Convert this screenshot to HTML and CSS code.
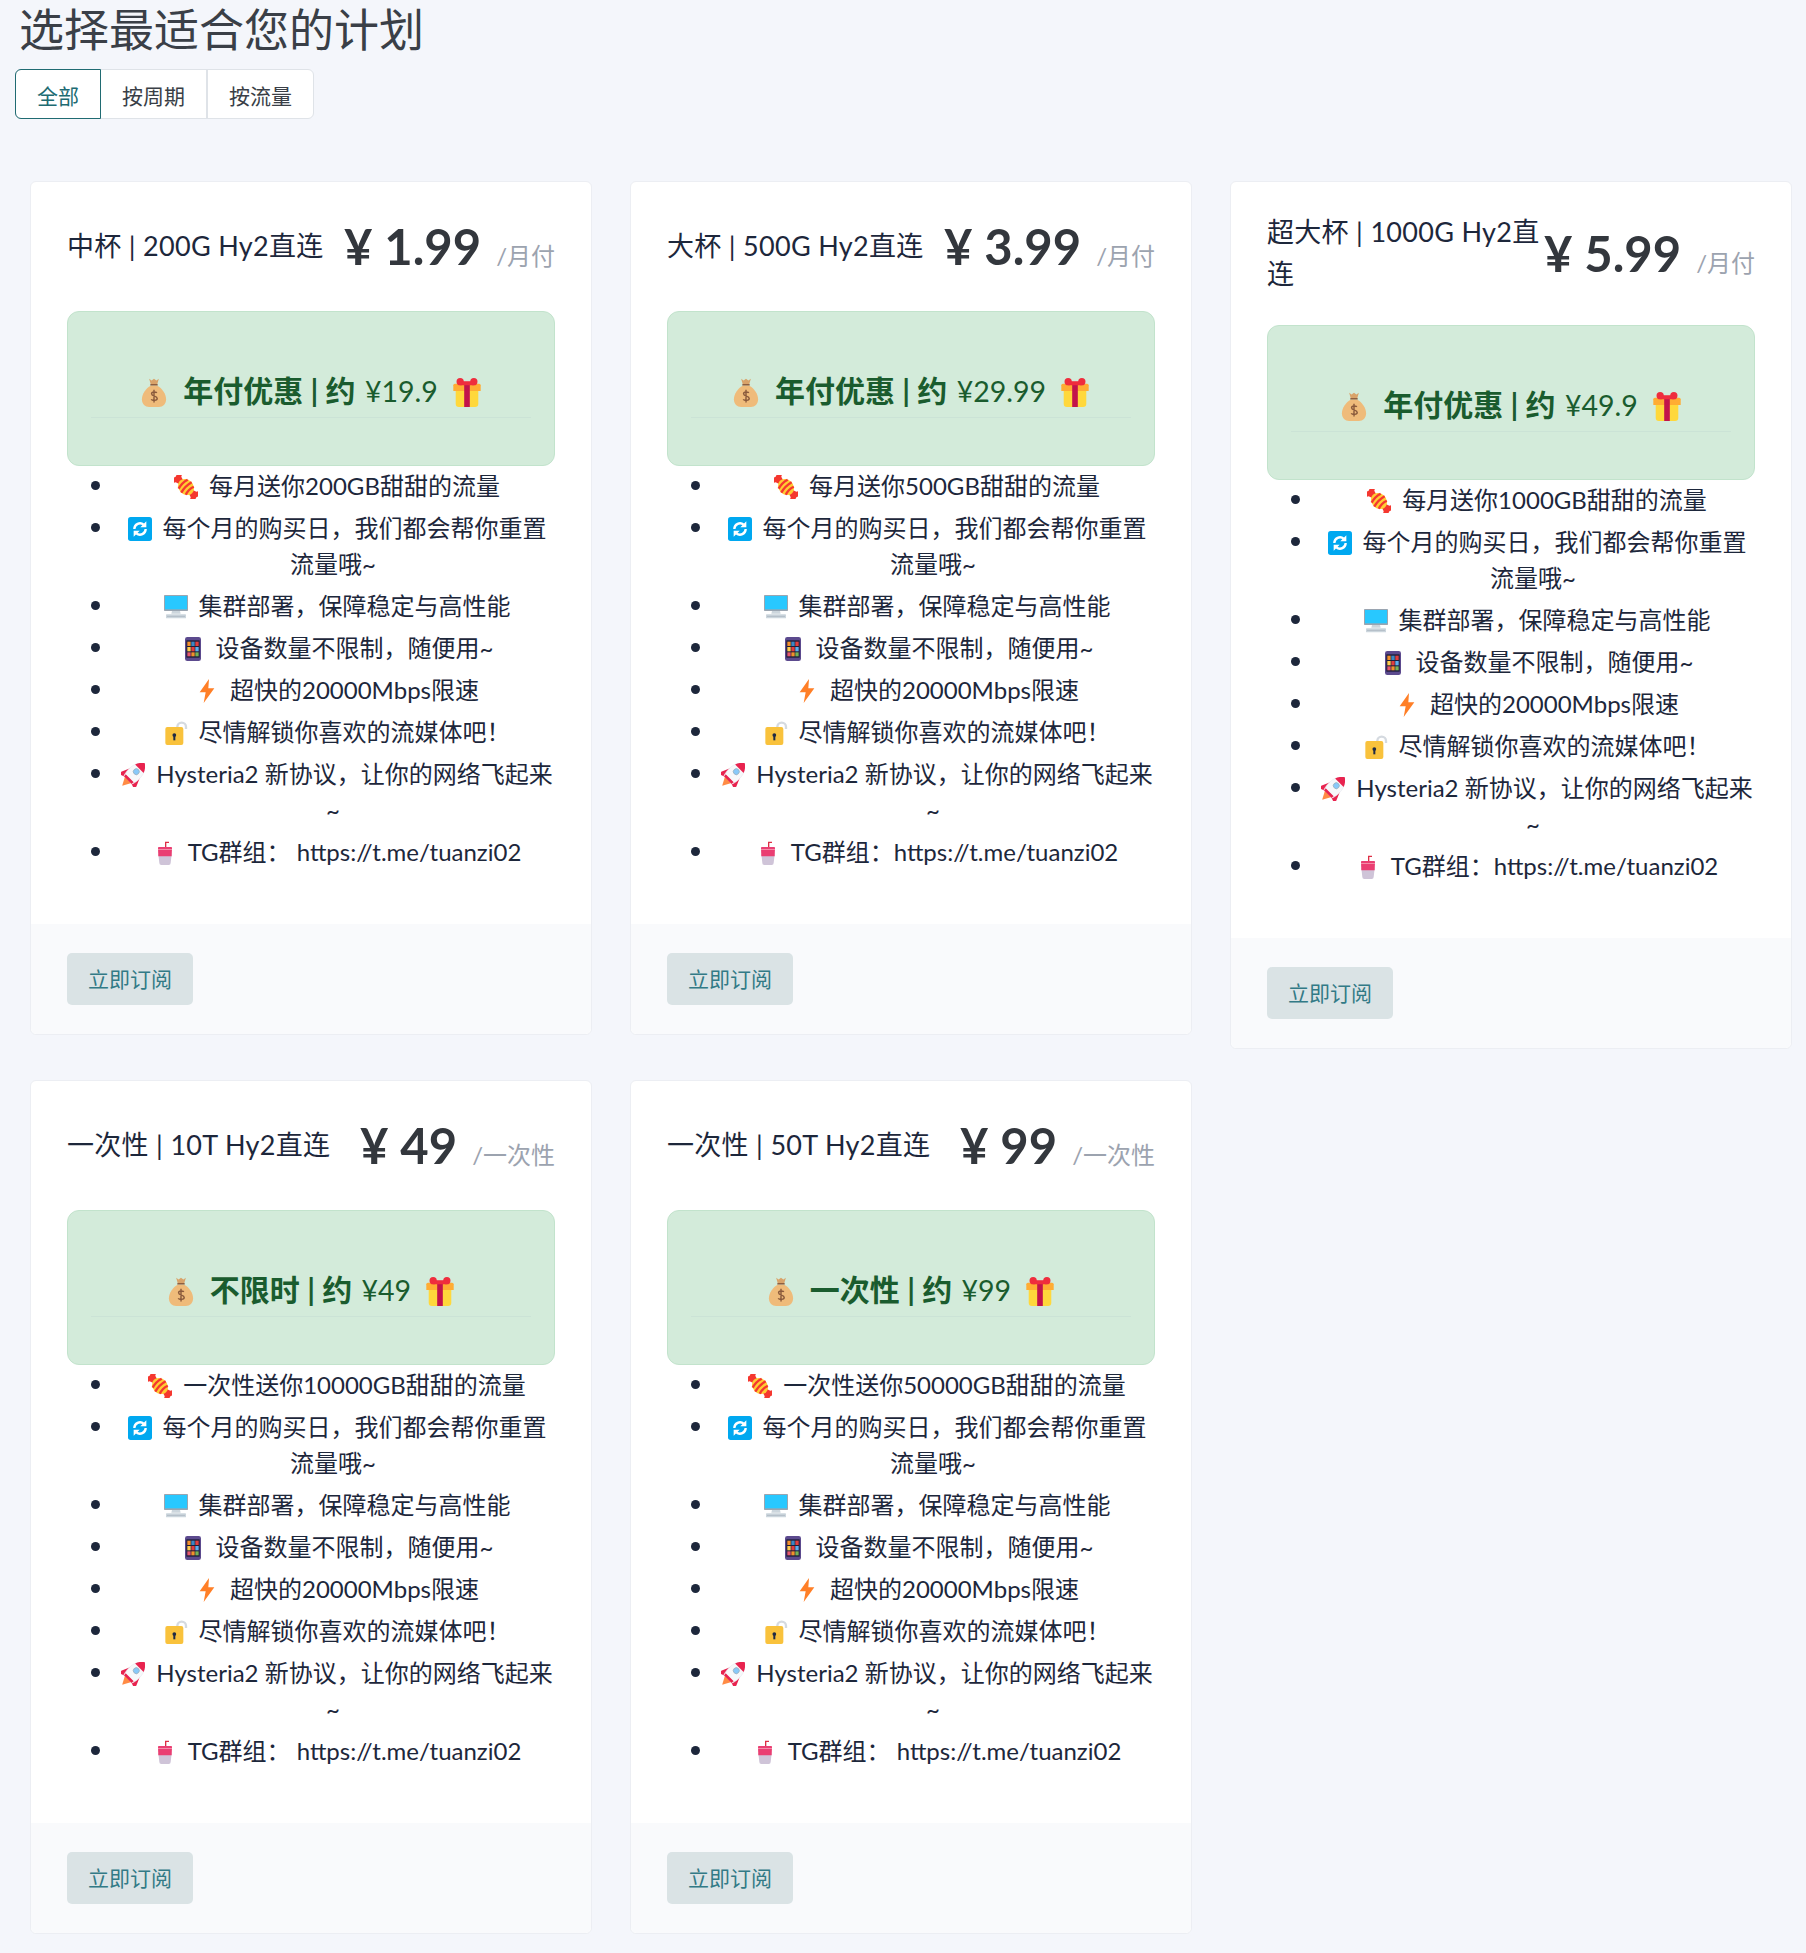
FILE: index.html
```html
<!DOCTYPE html>
<html lang="zh-CN">
<head>
  <meta charset="UTF-8" />
  <meta name="viewport" content="width=device-width, initial-scale=1.0" />
  <title>选择最适合您的计划</title>
  <link rel="stylesheet" href="styles.css">
</head>
<body>
  <svg class="sprite" xmlns="http://www.w3.org/2000/svg">
    <symbol id="i-bag" viewBox="3 0 30 36">
      <path fill="#D9A36A" d="M12 1l3 2 3-2 3 2 3-2-2 7H14z"/>
      <path fill="#8A5A3C" d="M13.500 7.500h9v2h-9z"/>
      <path fill="#EFBB7A" d="M14 9.500h8c6 3 11 10 11 17 0 6-4 9.500-9 9.500H12c-5 0-9-3.500-9-9.500 0-7 5-14 11-17z"/>
      <path fill="none" stroke="#8A5A3C" stroke-width="1.800" d="M21.500 18.500c-1-1.500-6.500-2-6.500 1 0 3.500 7 2.500 7 6 0 3-6 2.800-7.500 1M18 14.500v16"/>
    </symbol>
    <symbol id="i-gift" viewBox="1 0 34 36">
      <path fill="#FFD83B" d="M4 14h28v18a4 4 0 0 1-4 4H8a4 4 0 0 1-4-4z"/>
      <path fill="#FFAC33" d="M3 7h30a2 2 0 0 1 2 2v7H1V9a2 2 0 0 1 2-2z"/>
      <path fill="#C2134B" d="M14.500 7h7v29h-7z"/>
      <circle fill="#EF2D3D" cx="9.500" cy="4.500" r="4.500"/>
      <circle fill="#EF2D3D" cx="26.500" cy="4.500" r="4.500"/>
      <path fill="#EF2D3D" d="M9 4h18v5H9z"/>
    </symbol>
    <symbol id="i-candy" viewBox="0 0 36 36">
      <g transform="rotate(45 18 18)">
        <path fill="#F5372F" d="M-7 8l4 4 3-4 2 4 9 3v6l-9 3-2 4-3-4-4 4 3-10z"/>
        <path fill="#F5372F" d="M43 8l-4 4-3-4-2 4-9 3v6l9 3 2 4 3-4 4 4-3-10z"/>
        <ellipse fill="#FFCC33" cx="18" cy="18" rx="13" ry="11"/>
        <path fill="none" stroke="#F5372F" stroke-width="3.600" d="M12 8.500q-3 9.500 0 19M19 7q-3 11 0 22M26 9.500q-3 8.500 0 17"/>
      </g>
    </symbol>
    <symbol id="i-sync" viewBox="0 0 36 36">
      <rect fill="#00A8F0" width="36" height="36" rx="4"/>
      <path fill="none" stroke="#fff" stroke-width="3.500" d="M9.500 18a8.500 8.500 0 0 1 14-6.500M26.500 18a8.500 8.500 0 0 1-14 6.500"/>
      <path fill="#fff" d="M27.500 6.500v9h-9zM8.500 29.500v-9h9z"/>
    </symbol>
    <symbol id="i-pc" viewBox="0 0 36 36">
      <rect fill="#9AA5B1" y="0" width="36" height="24" rx="1"/>
      <rect fill="#28C8FF" x="1.500" y="1.500" width="33" height="20"/>
      <path fill="#CCD6DD" d="M12 24h12l1 4H11z"/>
      <rect fill="#CCD6DD" x="3" y="29" width="30" height="6" rx="1"/>
      <path stroke="#9AA5B1" stroke-width="1.200" stroke-dasharray="2 1" d="M5 32h26"/>
    </symbol>
    <symbol id="i-pad" viewBox="0 0 36 36">
      <rect fill="#5C4A8E" x="6" y="0" width="24" height="36" rx="3.500"/>
      <rect fill="#1D1D3A" x="8" y="5" width="20" height="26"/>
      <rect fill="#F4902C" x="9.500" y="7" width="5" height="6.500"/><rect fill="#3B88C3" x="15.500" y="7" width="5" height="6.500"/><rect fill="#E03E3E" x="21.500" y="7" width="5" height="6.500"/>
      <rect fill="#FFCC4D" x="9.500" y="15" width="5" height="6.500"/><rect fill="#E03E3E" x="15.500" y="15" width="5" height="6.500"/><rect fill="#5DADEC" x="21.500" y="15" width="5" height="6.500"/>
      <rect fill="#E8596E" x="9.500" y="23" width="5" height="6"/><rect fill="#F4902C" x="15.500" y="23" width="5" height="6"/><rect fill="#77B255" x="21.500" y="23" width="5" height="6"/>
    </symbol>
    <symbol id="i-bolt" viewBox="0 0 36 36">
      <path fill="#FF7F27" d="M21 0L7 20h9l-3 16 16-22h-9z"/>
    </symbol>
    <symbol id="i-lock" viewBox="0 0 36 36">
      <path fill="none" stroke="#D5DAE0" stroke-width="3.500" d="M20 14V9a6.500 6.500 0 0 1 13 0v3"/>
      <rect fill="#F9C23C" x="2" y="9" width="27" height="27" rx="3"/>
      <circle fill="#1F2A44" cx="15.500" cy="21" r="2.800"/>
      <path fill="#1F2A44" d="M14 21h3v8h-3z"/>
    </symbol>
    <symbol id="i-rocket" viewBox="0 0 36 36">
      <g transform="rotate(45 18 18)">
        <path fill="#FF8B45" d="M11 28h14l-7 13z"/>
        <path fill="#E8234F" d="M8 13L2 27l2 4 9-3zM28 13l6 14-2 4-9-3z"/>
        <path fill="#F7F8FA" stroke="#E6E8EE" stroke-width=".8" d="M18-7c13 9 12 25 9 35H9C6 18 5 2 18-7z"/>
        <path fill="#E8234F" d="M18-7c4.500 3 7.500 7 9 11.500H9C10.500 0 13.500-4 18-7zM9.500 25h17l-.8 4H10.300z"/>
        <circle fill="#88C9F9" stroke="#9AAAB4" cx="18" cy="11" r="4.500"/>
      </g>
    </symbol>
    <symbol id="i-cup" viewBox="0 0 36 36">
      <path fill="none" stroke="#DD2E44" stroke-width="2" d="M24 2h-5v8"/>
      <path fill="#CFC4D8" d="M8 20h20l-1.500 13a3 3 0 0 1-3 3h-11a3 3 0 0 1-3-3z"/>
      <path fill="#EA3E72" d="M8 9h20l.5 2-.5 12H8l-.5-12z"/>
      <path fill="#F7A0B4" d="M7.500 12h21v1.200h-21z"/>
    </symbol>
  </svg>

  <h1 class="page-title">选择最适合您的计划</h1>
  <div class="tabs">
    <a class="tab tab-active">全部</a>
    <a class="tab">按周期</a>
    <a class="tab">按流量</a>
  </div>

  <div class="plans">

    <div class="card">
      <div class="card-body">
        <div class="plan-head">
          <h3 class="plan-name">中杯 | 200G Hy2直连</h3>
          <div class="plan-price"><span class="amount">¥ 1.99</span><span class="period">/月付</span></div>
        </div>
        <div class="offer">
          <div class="offer-text"><svg class="emoji-big"><use href="#i-bag"/></svg><b>年付优惠 | 约</b> ¥19.9<svg class="emoji-big gift"><use href="#i-gift"/></svg></div>
          <hr class="offer-line">
        </div>
        <ul class="features">
          <li><svg class="emoji"><use href="#i-candy"/></svg>每月送你200GB甜甜的流量</li>
          <li><svg class="emoji"><use href="#i-sync"/></svg>每个月的购买日，我们都会帮你重置流量哦~</li>
          <li><svg class="emoji"><use href="#i-pc"/></svg>集群部署，保障稳定与高性能</li>
          <li><svg class="emoji"><use href="#i-pad"/></svg>设备数量不限制，随便用~</li>
          <li><svg class="emoji"><use href="#i-bolt"/></svg>超快的20000Mbps限速</li>
          <li><svg class="emoji"><use href="#i-lock"/></svg>尽情解锁你喜欢的流媒体吧！</li>
          <li><svg class="emoji"><use href="#i-rocket"/></svg>Hysteria2 新协议，让你的网络飞起来<br>~</li>
          <li><svg class="emoji"><use href="#i-cup"/></svg>TG群组：&nbsp;https://t.me/tuanzi02</li>
        </ul>
      </div>
      <div class="card-foot"><a class="btn">立即订阅</a></div>
    </div>

    <div class="card">
      <div class="card-body">
        <div class="plan-head">
          <h3 class="plan-name">大杯 | 500G Hy2直连</h3>
          <div class="plan-price"><span class="amount">¥ 3.99</span><span class="period">/月付</span></div>
        </div>
        <div class="offer">
          <div class="offer-text"><svg class="emoji-big"><use href="#i-bag"/></svg><b>年付优惠 | 约</b> ¥29.99<svg class="emoji-big gift"><use href="#i-gift"/></svg></div>
          <hr class="offer-line">
        </div>
        <ul class="features">
          <li><svg class="emoji"><use href="#i-candy"/></svg>每月送你500GB甜甜的流量</li>
          <li><svg class="emoji"><use href="#i-sync"/></svg>每个月的购买日，我们都会帮你重置流量哦~</li>
          <li><svg class="emoji"><use href="#i-pc"/></svg>集群部署，保障稳定与高性能</li>
          <li><svg class="emoji"><use href="#i-pad"/></svg>设备数量不限制，随便用~</li>
          <li><svg class="emoji"><use href="#i-bolt"/></svg>超快的20000Mbps限速</li>
          <li><svg class="emoji"><use href="#i-lock"/></svg>尽情解锁你喜欢的流媒体吧！</li>
          <li><svg class="emoji"><use href="#i-rocket"/></svg>Hysteria2 新协议，让你的网络飞起来<br>~</li>
          <li><svg class="emoji"><use href="#i-cup"/></svg>TG群组：https://t.me/tuanzi02</li>
        </ul>
      </div>
      <div class="card-foot"><a class="btn">立即订阅</a></div>
    </div>

    <div class="card">
      <div class="card-body">
        <div class="plan-head">
          <h3 class="plan-name">超大杯 | 1000G Hy2直连</h3>
          <div class="plan-price"><span class="amount">¥ 5.99</span><span class="period">/月付</span></div>
        </div>
        <div class="offer">
          <div class="offer-text"><svg class="emoji-big"><use href="#i-bag"/></svg><b>年付优惠 | 约</b> ¥49.9<svg class="emoji-big gift"><use href="#i-gift"/></svg></div>
          <hr class="offer-line">
        </div>
        <ul class="features">
          <li><svg class="emoji"><use href="#i-candy"/></svg>每月送你1000GB甜甜的流量</li>
          <li><svg class="emoji"><use href="#i-sync"/></svg>每个月的购买日，我们都会帮你重置流量哦~</li>
          <li><svg class="emoji"><use href="#i-pc"/></svg>集群部署，保障稳定与高性能</li>
          <li><svg class="emoji"><use href="#i-pad"/></svg>设备数量不限制，随便用~</li>
          <li><svg class="emoji"><use href="#i-bolt"/></svg>超快的20000Mbps限速</li>
          <li><svg class="emoji"><use href="#i-lock"/></svg>尽情解锁你喜欢的流媒体吧！</li>
          <li><svg class="emoji"><use href="#i-rocket"/></svg>Hysteria2 新协议，让你的网络飞起来<br>~</li>
          <li><svg class="emoji"><use href="#i-cup"/></svg>TG群组：https://t.me/tuanzi02</li>
        </ul>
      </div>
      <div class="card-foot"><a class="btn">立即订阅</a></div>
    </div>

    <div class="card">
      <div class="card-body">
        <div class="plan-head">
          <h3 class="plan-name">一次性 | 10T Hy2直连</h3>
          <div class="plan-price"><span class="amount">¥ 49</span><span class="period">/一次性</span></div>
        </div>
        <div class="offer">
          <div class="offer-text"><svg class="emoji-big"><use href="#i-bag"/></svg><b>不限时 | 约</b> ¥49<svg class="emoji-big gift"><use href="#i-gift"/></svg></div>
          <hr class="offer-line">
        </div>
        <ul class="features">
          <li><svg class="emoji"><use href="#i-candy"/></svg>一次性送你10000GB甜甜的流量</li>
          <li><svg class="emoji"><use href="#i-sync"/></svg>每个月的购买日，我们都会帮你重置流量哦~</li>
          <li><svg class="emoji"><use href="#i-pc"/></svg>集群部署，保障稳定与高性能</li>
          <li><svg class="emoji"><use href="#i-pad"/></svg>设备数量不限制，随便用~</li>
          <li><svg class="emoji"><use href="#i-bolt"/></svg>超快的20000Mbps限速</li>
          <li><svg class="emoji"><use href="#i-lock"/></svg>尽情解锁你喜欢的流媒体吧！</li>
          <li><svg class="emoji"><use href="#i-rocket"/></svg>Hysteria2 新协议，让你的网络飞起来<br>~</li>
          <li><svg class="emoji"><use href="#i-cup"/></svg>TG群组：&nbsp;https://t.me/tuanzi02</li>
        </ul>
      </div>
      <div class="card-foot"><a class="btn">立即订阅</a></div>
    </div>

    <div class="card">
      <div class="card-body">
        <div class="plan-head">
          <h3 class="plan-name">一次性 | 50T Hy2直连</h3>
          <div class="plan-price"><span class="amount">¥ 99</span><span class="period">/一次性</span></div>
        </div>
        <div class="offer">
          <div class="offer-text"><svg class="emoji-big"><use href="#i-bag"/></svg><b>一次性 | 约</b> ¥99<svg class="emoji-big gift"><use href="#i-gift"/></svg></div>
          <hr class="offer-line">
        </div>
        <ul class="features">
          <li><svg class="emoji"><use href="#i-candy"/></svg>一次性送你50000GB甜甜的流量</li>
          <li><svg class="emoji"><use href="#i-sync"/></svg>每个月的购买日，我们都会帮你重置流量哦~</li>
          <li><svg class="emoji"><use href="#i-pc"/></svg>集群部署，保障稳定与高性能</li>
          <li><svg class="emoji"><use href="#i-pad"/></svg>设备数量不限制，随便用~</li>
          <li><svg class="emoji"><use href="#i-bolt"/></svg>超快的20000Mbps限速</li>
          <li><svg class="emoji"><use href="#i-lock"/></svg>尽情解锁你喜欢的流媒体吧！</li>
          <li><svg class="emoji"><use href="#i-rocket"/></svg>Hysteria2 新协议，让你的网络飞起来<br>~</li>
          <li><svg class="emoji"><use href="#i-cup"/></svg>TG群组：&nbsp;https://t.me/tuanzi02</li>
        </ul>
      </div>
      <div class="card-foot"><a class="btn">立即订阅</a></div>
    </div>

  </div>
</body>
</html>
```

FILE: styles.css
```css
body {
  margin: 0;
  padding: 0 15px 21px;
  background: #f4f6fb;
  color: #1d273b;
  font-family: Lato, "Noto Sans CJK SC", sans-serif;
  font-size: 24px;
  line-height: 36px;
}

.sprite {
  display: none;
}

.page-title {
  margin: 0 0 9px 4px;
  height: 60px;
  font-size: 45px;
  line-height: 60px;
  font-weight: 400;
  color: #3a3f47;
}

.tabs {
  display: inline-flex;
  background: #fff;
  border: 1px solid #dfe3e8;
  border-radius: 6px;
  height: 50px;
  box-sizing: border-box;
  font-size: 21px;
  vertical-align: top;
}

.tab {
  display: flex;
  align-items: center;
  padding: 3px 21px 0;
  color: #3a3f47;
  border-right: 2px solid #dfe3e8;
}

.tab:last-child {
  border-right: none;
}

.tab-active {
  margin: -1px 0 -1px -1px;
  border: 1px solid #206b72;
  border-radius: 6px 0 0 6px;
  color: #206b72;
}

.plans {
  display: grid;
  grid-template-columns: repeat(3, 562px);
  gap: 30.500px 38px;
  align-items: start;
  margin: 62px 0 0 15px;
}

.card {
  background: #fff;
  border: 1px solid #eceef3;
  border-radius: 6px;
}

.card-body {
  padding: 29px 36px 54px;
}

.plan-head {
  display: flex;
  align-items: center;
  justify-content: space-between;
  min-height: 70px;
  margin-bottom: 30px;
}

.plan-name {
  margin: 0;
  font-size: 27px;
  letter-spacing: .3px;
  line-height: 42px;
  font-weight: 400;
  color: #1d273b;
}

.plan-price {
  flex: none;
  display: flex;
  align-items: baseline;
  margin-left: 4px;
}

.amount {
  font-size: 49px;
  line-height: 70px;
  font-weight: 700;
  color: #33373d;
}

.period {
  margin-left: 15px;
  color: #9ca3af;
}

.offer {
  height: 155px;
  box-sizing: border-box;
  padding: 58px 23px 0;
  background: #d3ebda;
  border: 1px solid #c2e3cc;
  border-radius: 12px;
  color: #1a5c2e;
  font-size: 28.500px;
  text-align: center;
}

.offer-text {
  line-height: 40px;
  height: 40px;
}

.offer-text b {
  margin-right: 2px;
  font-size: 30px;
  font-weight: 700;
}

.emoji-big {
  width: 26px;
  height: 29px;
  margin-right: 16px;
  vertical-align: -5px;
}

.gift {
  width: 28px;
  margin: 0 0 0 15px;
}

.offer-line {
  margin: 7px 0 0;
  border: none;
  border-top: 1px solid #cbe3d6;
}

.features {
  margin: 2px 0 0;
  padding: 0 0 0 44px;
  list-style: none;
  text-align: center;
}

.features li {
  position: relative;
  margin-bottom: 6px;
}

.features li::before {
  content: "";
  position: absolute;
  left: -20px;
  top: 13px;
  width: 9px;
  height: 9px;
  border-radius: 50%;
  background: #1d273b;
}

.features li:last-child {
  margin-bottom: 0;
}

.emoji {
  width: 24px;
  height: 24px;
  margin: 0 11px 0 8px;
  vertical-align: -4px;
}

.card-foot {
  padding: 29px 36px;
  background: #f9fafc;
  border-radius: 0 0 6px 6px;
}

.btn {
  display: inline-block;
  width: 126px;
  height: 52px;
  line-height: 52px;
  text-align: center;
  font-size: 21px;
  color: #327a86;
  background: #dae3e5;
  border-radius: 5px;
}
```
